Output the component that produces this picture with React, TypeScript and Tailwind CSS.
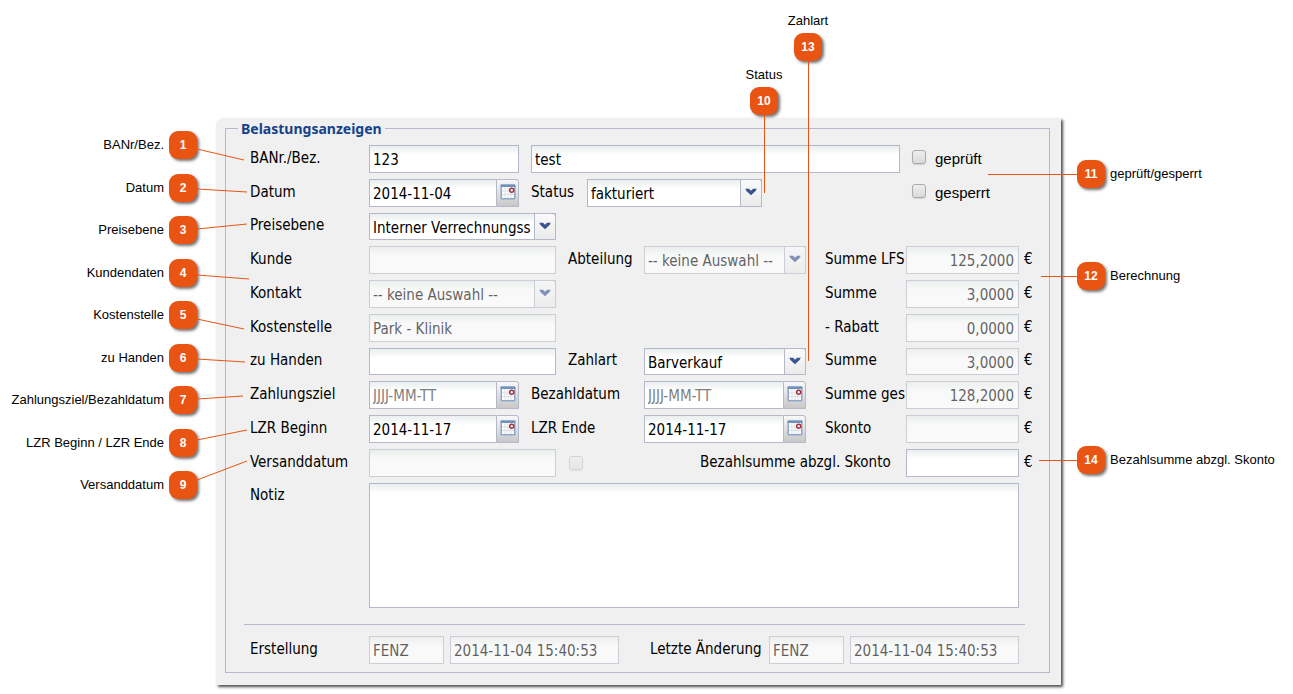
import React from 'react';

interface LeftNote {
  nr: number;
  text: string;
  from: number;
  to: number;
  length: number;
}

// from/to are the heights of the leader line's ends, the badge centre is 20
const leftNotes: LeftNote[] = [
  { nr: 1, text: 'BANr/Bez.', from: 24, to: 35, length: 47 },
  { nr: 2, text: 'Datum', from: 21, to: 24, length: 50 },
  { nr: 3, text: 'Preisebene', from: 19, to: 14, length: 50 },
  { nr: 4, text: 'Kundendaten', from: 22, to: 26, length: 52 },
  { nr: 5, text: 'Kostenstelle', from: 24, to: 34, length: 47 },
  { nr: 6, text: 'zu Handen', from: 21, to: 24, length: 48 },
  { nr: 7, text: 'Zahlungsziel/Bezahldatum', from: 19, to: 16, length: 46 },
  { nr: 8, text: 'LZR Beginn / LZR Ende', from: 17, to: 7, length: 50 },
  { nr: 9, text: 'Versanddatum', from: 15, to: -4, length: 50 },
];

const frame = 'border border-[#b5b8c8] bg-white bg-linear-to-b from-[#eaeeee] to-white to-[9px]';

const Badge: React.FC<{ nr: number; children?: React.ReactNode }> = ({ nr, children }) => (
  <span className="relative z-10 flex size-7 shrink-0 items-center justify-center rounded-[9px] bg-[#e95412] text-xs font-bold text-white shadow-[2px_2px_3px_rgba(0,0,0,0.55)]">
    {nr}
    {children}
  </span>
);

const RightNote: React.FC<{ nr: number; text: string; line: string }> = ({ nr, text, line }) => (
  <li className="flex items-center gap-[5px] whitespace-nowrap">
    <Badge nr={nr}>
      <span className={`absolute right-full h-px bg-[#e95412] ${line}`} />
    </Badge>
    {text}
  </li>
);

const TopNote: React.FC<{ nr: number; text: string; line: string }> = ({ nr, text, line }) => (
  <li className="flex w-7 flex-col items-center gap-0.5 whitespace-nowrap leading-5">
    {text}
    <Badge nr={nr}>
      <span className={`absolute top-full w-px bg-[#e95412] ${line}`} />
    </Badge>
  </li>
);

const Label: React.FC<{ htmlFor: string; className: string; children: React.ReactNode }> = ({ htmlFor, className, children }) => (
  <label htmlFor={htmlFor} className={`shrink-0 whitespace-nowrap pb-[3px] ${className}`}>
    {children}
  </label>
);

interface FieldProps {
  id: string;
  className?: string;
  value?: string;
  disabled?: boolean;
  label?: string;
}

const TextField: React.FC<FieldProps> = ({ id, className, value = '', disabled, label }) => (
  <input
    id={id}
    type="text"
    aria-label={label}
    defaultValue={value}
    disabled={disabled}
    className={`h-full min-w-0 pl-[3px] pr-1 pt-0.5 outline-none disabled:opacity-60 ${frame} ${className}`}
  />
);

const SelectField: React.FC<FieldProps> = ({ id, className, value, disabled }) => (
  <div className={`relative h-full shrink-0 ${disabled ? 'opacity-60' : ''} ${className}`}>
    <select id={id} disabled={disabled} className={`size-full appearance-none pl-[3px] pr-5 pt-0.5 opacity-100 outline-none ${frame}`}>
      <option>{value}</option>
    </select>
    <span className="pointer-events-none absolute inset-y-0 right-0 flex w-[22px] justify-center rounded-tr-[3px] border border-[#b5b8c8] bg-linear-to-b from-[#fafafa] to-[#ebebeb] pt-2">
      <svg width="12" height="8" viewBox="0 0 12 8" aria-hidden="true">
        <path d="M0.3 0.8H4L6 2.8L8 0.8H11.7L10.6 3L6 7.2L1.4 3Z" fill="#3a5490" />
      </svg>
    </span>
  </div>
);

const CalendarIcon: React.FC = () => (
  <svg width="16" height="16" viewBox="0 0 16 16" aria-hidden="true">
    <rect x="0.5" y="0.5" width="15" height="15" rx="1" fill="#8ea6c8" />
    <rect x="0.5" y="0.5" width="15" height="2.5" rx="1" fill="#6f91bd" />
    <rect x="2" y="3" width="12" height="11" fill="#fcfcfc" />
    <path d="M5 3V14M8 3V14M11 3V14M2 7H14M2 10.5H14" stroke="#dcdfe4" strokeWidth="1" />
    <circle cx="11.7" cy="6.3" r="2" fill="#fff" stroke="#a82c38" strokeWidth="1.5" />
  </svg>
);

const DateField: React.FC<FieldProps> = ({ id, className, value }) => (
  <div className={`flex h-full shrink-0 ${className}`}>
    <input
      id={id}
      type="text"
      defaultValue={value}
      placeholder="JJJJ-MM-TT"
      className={`min-w-0 flex-1 border-r-0 pl-[3px] pr-1 pt-0.5 outline-none placeholder:text-[#808080] ${frame}`}
    />
    <button
      type="button"
      aria-label="Kalender"
      className="flex w-[23px] shrink-0 justify-center rounded-tr-[3px] border border-[#b5b8c8] bg-linear-to-b from-[#f8f8f8] to-[#c8c8c8] pt-1"
    >
      <CalendarIcon />
    </button>
  </div>
);

const CheckBox: React.FC<{ id: string; label?: string; disabled?: boolean }> = ({ id, label, disabled }) => (
  <input
    id={id}
    type="checkbox"
    aria-label={label}
    disabled={disabled}
    className="size-3.5 shrink-0 appearance-none rounded-[3px] border border-[#aaaaaa] bg-linear-to-b from-[#eeeeee] to-[#dadada] shadow-[0_1px_1px_rgba(0,0,0,0.12)] disabled:opacity-40"
  />
);

const CheckField: React.FC<{ id: string; text: string }> = ({ id, text }) => (
  <div className="flex h-full w-32 shrink-0 items-start gap-[9px] pt-[5px]">
    <CheckBox id={id} />
    <label htmlFor={id} className="font-['Liberation_Sans',Arial,sans-serif] leading-[18px]">
      {text}
    </label>
  </div>
);

// amount column on the right of the form
const Amount: React.FC<FieldProps & { wide?: boolean }> = ({ id, label, value, disabled, wide }) => (
  <div className="ml-auto flex h-full shrink-0 items-center">
    <Label htmlFor={id} className={wide ? 'w-[206px]' : 'w-[81px]'}>
      {label}
    </Label>
    <TextField id={id} value={value} disabled={disabled} className="w-[113px] text-right" />
    <span className="w-[21px] pb-[3px] pl-[5px]">€</span>
  </div>
);

const Row: React.FC<{ low?: boolean; children: React.ReactNode }> = ({ low, children }) => (
  <div className={`flex items-center ${low ? 'h-[27px]' : 'h-7'}`}>{children}</div>
);

const ChargeForm: React.FC = () => (
  <form className="min-w-0 flex-1 rounded-tl-lg bg-[#f0f0f0] pb-3 pl-[9px] pr-[11px] font-['DejaVu_Sans_Condensed','Noto_Sans',sans-serif] text-[15px] leading-5 text-black shadow-[2px_2px_3px_rgba(0,0,0,0.7)]">
    <fieldset className="min-w-0 border border-[#b5b8c8] pb-2 pl-6 pr-[9px]">
      <legend className="-ml-3 px-[3px] pt-px font-['Noto_Sans','Open_Sans',sans-serif] text-sm leading-5 font-bold text-[#15428b]">
        Belastungsanzeigen
      </legend>
      <div className="flex flex-col gap-1.5 pt-1.5">
        <Row>
          <Label htmlFor="banr" className="w-[119px]">BANr./Bez.</Label>
          <TextField id="banr" value="123" className="w-[150px] shrink-0" />
          <TextField id="bez" label="Bezeichnung" value="test" className="mx-3 flex-1" />
          <CheckField id="geprueft" text="geprüft" />
        </Row>
        <Row>
          <Label htmlFor="datum" className="w-[119px]">Datum</Label>
          <DateField id="datum" value="2014-11-04" className="w-[150px]" />
          <Label htmlFor="status" className="ml-3 w-14">Status</Label>
          <SelectField id="status" value="fakturiert" className="mr-auto w-[175px]" />
          <CheckField id="gesperrt" text="gesperrt" />
        </Row>
        <Row low>
          <Label htmlFor="preisebene" className="w-[119px]">Preisebene</Label>
          <SelectField id="preisebene" value="Interner Verrechnungss" className="w-[187px]" />
        </Row>
        <Row>
          <Label htmlFor="kunde" className="w-[119px]">Kunde</Label>
          <TextField id="kunde" disabled className="w-[187px]" />
          <Label htmlFor="abteilung" className="ml-3 w-[76px]">Abteilung</Label>
          <SelectField id="abteilung" value="-- keine Auswahl --" disabled className="w-[162px]" />
          <Amount id="summe-lfs" label="Summe LFS" value="125,2000" disabled />
        </Row>
        <Row>
          <Label htmlFor="kontakt" className="w-[119px]">Kontakt</Label>
          <SelectField id="kontakt" value="-- keine Auswahl --" disabled className="w-[187px]" />
          <Amount id="summe" label="Summe" value="3,0000" disabled />
        </Row>
        <Row>
          <Label htmlFor="kostenstelle" className="w-[119px]">Kostenstelle</Label>
          <TextField id="kostenstelle" value="Park - Klinik" disabled className="w-[187px]" />
          <Amount id="rabatt" label="- Rabatt" value="0,0000" disabled />
        </Row>
        <Row low>
          <Label htmlFor="zuhanden" className="w-[119px]">zu Handen</Label>
          <TextField id="zuhanden" className="w-[187px]" />
          <Label htmlFor="zahlart" className="ml-3 w-[76px]">Zahlart</Label>
          <SelectField id="zahlart" value="Barverkauf" className="w-[162px]" />
          <Amount id="summe-netto" label="Summe" value="3,0000" disabled />
        </Row>
        <Row>
          <Label htmlFor="zahlungsziel" className="w-[119px]">Zahlungsziel</Label>
          <DateField id="zahlungsziel" className="w-[150px]" />
          <Label htmlFor="bezahldatum" className="ml-3 w-[113px]">Bezahldatum</Label>
          <DateField id="bezahldatum" className="w-[162px]" />
          <Amount id="summe-ges" label="Summe ges" value="128,2000" disabled />
        </Row>
        <Row>
          <Label htmlFor="lzr-beginn" className="w-[119px]">LZR Beginn</Label>
          <DateField id="lzr-beginn" value="2014-11-17" className="w-[150px]" />
          <Label htmlFor="lzr-ende" className="ml-3 w-[113px]">LZR Ende</Label>
          <DateField id="lzr-ende" value="2014-11-17" className="w-[162px]" />
          <Amount id="skonto" label="Skonto" disabled />
        </Row>
        <Row>
          <Label htmlFor="versanddatum" className="w-[119px]">Versanddatum</Label>
          <TextField id="versanddatum" disabled className="mr-[13px] w-[187px]" />
          <CheckBox id="versendet" label="Versendet" disabled />
          <Amount id="bezahlsumme" label="Bezahlsumme abzgl. Skonto" wide />
        </Row>
        <div className="flex pr-[21px]">
          <Label htmlFor="notiz" className="w-[119px] pt-0.5">Notiz</Label>
          <textarea id="notiz" className={`h-[125px] min-w-0 flex-1 resize-none px-1 outline-none ${frame}`} />
        </div>
      </div>
      <hr className="-ml-1.5 mb-[11px] mr-[15px] mt-4 border-[#b5b8c8]" />
      <div className="flex h-7 items-center pr-[21px]">
        <Label htmlFor="erstellung" className="w-[119px]">Erstellung</Label>
        <TextField id="erstellung" value="FENZ" disabled className="mr-1.5 w-[75px]" />
        <TextField id="erstellt-am" label="Erstellt am" value="2014-11-04 15:40:53" disabled className="mr-auto w-[169px]" />
        <Label htmlFor="aenderung" className="w-[119px]">Letzte Änderung</Label>
        <TextField id="aenderung" value="FENZ" disabled className="mr-1.5 w-[75px]" />
        <TextField id="geaendert-am" label="Geändert am" value="2014-11-04 15:40:53" disabled className="w-[169px]" />
      </div>
    </fieldset>
  </form>
);

const App: React.FC = () => (
  <main className="bg-white pb-2 font-['Liberation_Sans',Arial,sans-serif] text-[13px] text-black">
    <ul className="flex items-end gap-4 pl-[750px] pt-[11px]">
      <TopNote nr={10} text="Status" line="h-[78px]" />
      <li className="mb-[54px]">
        <ul>
          <TopNote nr={13} text="Zahlart" line="h-[300px]" />
        </ul>
      </li>
    </ul>
    <div className="mt-[3px] flex items-start">
      <ul className="mt-[13px] flex h-[368px] w-[216px] shrink-0 flex-col justify-between pr-[19px]">
        {leftNotes.map((note) => (
          <li key={note.nr} className="flex items-center justify-end gap-[5px] whitespace-nowrap">
            {note.text}
            <Badge nr={note.nr}>
              <svg width="52" height="40" className="absolute left-full overflow-visible" aria-hidden="true">
                <line x1="0" y1={note.from} x2={note.length} y2={note.to} stroke="#e95412" />
              </svg>
            </Badge>
          </li>
        ))}
      </ul>
      <ChargeForm />
      <ul className="flex w-[232px] shrink-0 flex-col pl-4 pt-[42px]">
        <RightNote nr={11} text="geprüft/gesperrt" line="w-[89px]" />
        <li className="h-[74px]" aria-hidden="true" />
        <RightNote nr={12} text="Berechnung" line="w-9" />
        <li className="h-[156px]" aria-hidden="true" />
        <RightNote nr={14} text="Bezahlsumme abzgl. Skonto" line="w-[38px]" />
      </ul>
    </div>
  </main>
);

export default App;
